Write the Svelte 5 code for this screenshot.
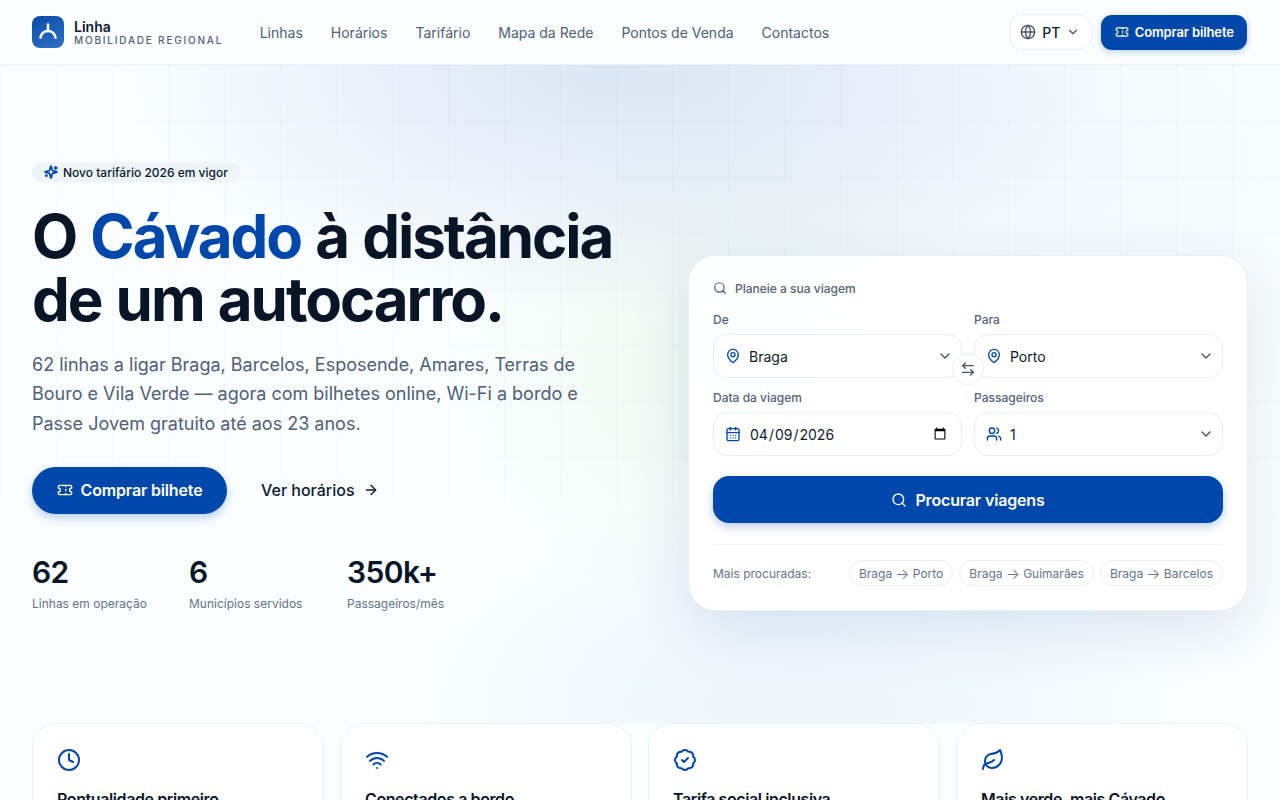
<script>
  const icons = {
    ticket: ['M2 9a3 3 0 0 1 0 6v2a2 2 0 0 0 2 2h16a2 2 0 0 0 2-2v-2a3 3 0 0 1 0-6V7a2 2 0 0 0-2-2H4a2 2 0 0 0-2 2Z', 'M13 5v2', 'M13 17v2', 'M13 11v2'],
    globe: ['M2 12a10 10 0 1 0 20 0a10 10 0 1 0-20 0', 'M12 2a14.5 14.5 0 0 0 0 20 14.5 14.5 0 0 0 0-20', 'M2 12h20'],
    chevron: ['m6 9 6 6 6-6'],
    search: ['M3 11a8 8 0 1 0 16 0a8 8 0 1 0-16 0', 'm21 21-4.3-4.3'],
    pin: ['M20 10c0 6-8 12-8 12s-8-6-8-12a8 8 0 0 1 16 0Z', 'M9 10a3 3 0 1 0 6 0a3 3 0 1 0-6 0'],
    calendar: ['M5 4h14a2 2 0 0 1 2 2v14a2 2 0 0 1-2 2H5a2 2 0 0 1-2-2V6a2 2 0 0 1 2-2Z', 'M16 2v4', 'M8 2v4', 'M3 10h18', 'M8 14h.01', 'M12 14h.01', 'M16 14h.01', 'M8 18h.01', 'M12 18h.01', 'M16 18h.01'],
    users: ['M16 21v-2a4 4 0 0 0-4-4H6a4 4 0 0 0-4 4v2', 'M5 7a4 4 0 1 0 8 0a4 4 0 1 0-8 0', 'M22 21v-2a4 4 0 0 0-3-3.87', 'M16 3.13a4 4 0 0 1 0 7.75'],
    arrow: ['M5 12h14', 'm12 5 7 7-7 7'],
    swap: ['M8 3 4 7l4 4', 'M4 7h16', 'm16 21 4-4-4-4', 'M20 17H4'],
    clock: ['M2 12a10 10 0 1 0 20 0a10 10 0 1 0-20 0', 'M12 6v6l4 2'],
    wifi: ['M12 20h.01', 'M2 8.82a15 15 0 0 1 20 0', 'M5 12.859a10 10 0 0 1 14 0', 'M8.5 16.429a5 5 0 0 1 7 0'],
    badge: ['M3.85 8.62a4 4 0 0 1 4.78-4.77 4 4 0 0 1 6.74 0 4 4 0 0 1 4.78 4.78 4 4 0 0 1 0 6.74 4 4 0 0 1-4.77 4.78 4 4 0 0 1-6.75 0 4 4 0 0 1-4.78-4.77 4 4 0 0 1 0-6.76Z', 'm9 12 2 2 4-4'],
    leaf: ['M11 20A7 7 0 0 1 9.8 6.1C15.5 5 17 4.48 19 2c1 2 2 4.18 2 8 0 5.5-4.78 10-10 10Z', 'M2 21c0-3 1.85-5.36 5.08-6C9.5 14.52 12 13 13 12'],
    sparkles: ['M9.9 15.5A2 2 0 0 0 8.5 14l-6.1-1.6a.5.5 0 0 1 0-1L8.5 9.9A2 2 0 0 0 9.9 8.5l1.6-6.1a.5.5 0 0 1 1 0L14 8.5a2 2 0 0 0 1.5 1.4l6.1 1.6a.5.5 0 0 1 0 1L15.5 14a2 2 0 0 0-1.5 1.5l-1.6 6.1a.5.5 0 0 1-1 0z', 'M20 3v4', 'M22 5h-4', 'M4 17v2', 'M5 18H3']
  }

  const nav = ['Linhas', 'Horários', 'Tarifário', 'Mapa da Rede', 'Pontos de Venda', 'Contactos']
  const stats = [
    { n: '62', l: 'Linhas em operação' },
    { n: '6', l: 'Municípios servidos' },
    { n: '350k+', l: 'Passageiros/mês' }
  ]
  const routes = ['Porto', 'Guimarães', 'Barcelos']
  const features = [
    { icon: 'clock', title: 'Pontualidade primeiro' },
    { icon: 'wifi', title: 'Conectados a bordo' },
    { icon: 'badge', title: 'Tarifa social inclusiva' },
    { icon: 'leaf', title: 'Mais verde, mais Cávado' }
  ]
</script>

{#snippet icon(name, cls)}
  <svg class="ic {cls}" viewBox="0 0 24 24" fill="none" stroke="currentColor" stroke-width="2" stroke-linecap="round" stroke-linejoin="round" aria-hidden="true">
    {#each icons[name] as d}<path {d} />{/each}
  </svg>
{/snippet}

<header class="top">
  <a class="brand" href="#top">
    <span class="logo">
      <svg viewBox="0 0 32 32" fill="none" stroke="#fff" stroke-width="2.6" stroke-linecap="round" stroke-linejoin="round" aria-hidden="true">
        <path d="M8.5 21.500c1-4.500 4-6.500 7.500-6.500s6.500 2 7.500 6.500" />
        <path d="M16 15V8.500" />
      </svg>
    </span>
    <span class="brand-text">
      <b>Linha</b>
      <small>Mobilidade Regional</small>
    </span>
  </a>
  <nav class="nav">
    {#each nav as item}<a href="#top">{item}</a>{/each}
  </nav>
  <div class="top-actions">
    <button class="lang">
      {@render icon('globe', 's16 grey')}
      <span>PT</span>
      {@render icon('chevron', 's14 grey')}
    </button>
    <button class="cta">
      {@render icon('ticket', 's14')}
      Comprar bilhete
    </button>
  </div>
</header>

<main>
  <section class="hero">
    <div class="grid-lines"></div>
    <div class="hero-left">
      <span class="pill">{@render icon('sparkles', 's14 blue heavy')} Novo tarifário 2026 em vigor</span>
      <h1>O <em>Cávado</em> à distância de um autocarro.</h1>
      <p class="lead">62 linhas a ligar Braga, Barcelos, Esposende, Amares, Terras de Bouro e Vila Verde — agora com bilhetes online, Wi-Fi a bordo e Passe Jovem gratuito até aos 23 anos.</p>
      <div class="hero-btns">
        <button class="big">{@render icon('ticket', 's16')} Comprar bilhete</button>
        <a class="ghost" href="#top">Ver horários {@render icon('arrow', 's16')}</a>
      </div>
      <div class="stats">
        {#each stats as s}
          <div>
            <div class="num">{s.n}</div>
            <div class="lbl">{s.l}</div>
          </div>
        {/each}
      </div>
    </div>

    <form class="planner">
      <div class="plan-title">{@render icon('search', 's14 grey')} Planeie a sua viagem</div>
      <div class="fields">
        <label class="f">
          <span>De</span>
          <div class="box">
            {@render icon('pin', 's16 blue')}
            <select><option>Braga</option></select>
            {@render icon('chevron', 's16 grey')}
          </div>
        </label>
        <label class="f">
          <span>Para</span>
          <div class="box">
            {@render icon('pin', 's16 blue')}
            <select><option>Porto</option></select>
            {@render icon('chevron', 's16 grey')}
          </div>
        </label>
        <label class="f">
          <span>Data da viagem</span>
          <div class="box date">
            {@render icon('calendar', 's16 blue')}
            <input type="date" value="2026-04-09" />
          </div>
        </label>
        <label class="f">
          <span>Passageiros</span>
          <div class="box">
            {@render icon('users', 's16 blue')}
            <select><option>1</option></select>
            {@render icon('chevron', 's16 grey')}
          </div>
        </label>
        <button type="button" class="swap" aria-label="Trocar">{@render icon('swap', 's16 grey')}</button>
      </div>
      <button type="button" class="go">{@render icon('search', 's16')} Procurar viagens</button>
      <div class="popular">
        <span>Mais procuradas:</span>
        <div class="chips">
          {#each routes as r}<a href="#top">Braga <i>→</i> {r}</a>{/each}
        </div>
      </div>
    </form>
  </section>

  <section class="features">
    {#each features as f}
      <article>
        {@render icon(f.icon, 's24 blue')}
        <h3>{f.title}</h3>
      </article>
    {/each}
  </section>
</main>

<style>
  :global(body) {
    background: #fafeff;
    color: #0b1b2e;
    font-family: Inter, "Liberation Sans", sans-serif;
    overflow-x: hidden;
  }
  a { color: inherit; text-decoration: none; }
  button { font-family: inherit; cursor: pointer; }

  .ic { flex: none; display: block; }
  .s14 { width: 14px; height: 14px; }
  .s16 { width: 16px; height: 16px; }
  .s24 { width: 24px; height: 24px; }
  .grey { color: #475569; }
  .blue { color: #0047ab; }
  .heavy { stroke-width: 3; }

  .top {
    height: 64px;
    display: flex;
    align-items: center;
    padding: 0 32px;
    background: #fbfdff;
    border-bottom: 1px solid #eef3f8;
  }
  .brand { display: flex; align-items: center; gap: 10px; }
  .logo {
    width: 32px;
    height: 32px;
    border-radius: 8px;
    background: linear-gradient(150deg, #0a4aa8, #2f72c4);
    display: block;
  }
  .logo svg { display: block; width: 32px; height: 32px; }
  .brand-text { display: flex; flex-direction: column; margin-top: 2px; }
  .brand-text b { font-size: 14px; font-weight: 600; line-height: 14px; color: #0b1b2e; }
  .brand-text small {
    font-size: 10px;
    line-height: 12px;
    font-weight: 500;
    letter-spacing: 0.18em;
    text-transform: uppercase;
    color: #526278;
  }
  .nav { display: flex; gap: 28px; margin-left: 36.5px; font-size: 14px; color: #4f6077; }
  .top-actions { margin-left: auto; margin-right: 0.7px; display: flex; align-items: center; gap: 8px; }
  .lang {
    height: 36px;
    width: 84px;
    display: flex;
    align-items: center;
    gap: 6px;
    padding: 0 0 0 10px;
    font-size: 14px;
    font-weight: 500;
    color: #0b1b2e;
    background: #fff;
    border: 1px solid #eaf0f6;
    border-radius: 14px;
  }
  .cta {
    height: 35px;
    width: 146px;
    display: flex;
    align-items: center;
    justify-content: center;
    gap: 6px;
    border: 0;
    border-radius: 11px;
    background: #0047ab;
    color: #fff;
    font-size: 13px;
    font-weight: 600;
    letter-spacing: -0.01em;
    box-shadow: 0 2px 6px rgba(0, 71, 171, 0.25);
  }

  .hero {
    position: relative;
    display: grid;
    grid-template-columns: 1.1fr 1fr;
    gap: 40px;
    align-items: start;
    height: 658px;
    box-sizing: border-box;
    padding: 97px 32px 0;
    background:
      radial-gradient(500px 250px at 610px 0, rgba(0, 71, 171, 0.13), transparent 100%),
      radial-gradient(460px 300px at 1000px 100px, rgba(0, 71, 171, 0.03), transparent 100%),
      radial-gradient(300px 260px at 740px 300px, rgba(110, 200, 90, 0.09), transparent 100%),
      radial-gradient(420px 220px at 800px 640px, rgba(0, 120, 190, 0.06), transparent 100%);
  }
  .grid-lines {
    position: absolute;
    inset: 0;
    background-image:
      linear-gradient(to right, rgba(0, 71, 171, 0.018) 1px, transparent 1px),
      linear-gradient(to bottom, rgba(0, 71, 171, 0.018) 1px, transparent 1px);
    background-size: 56px 56px;
    -webkit-mask-image: linear-gradient(to bottom, #000 60%, transparent 80%);
    mask-image: linear-gradient(to bottom, #000 60%, transparent 80%);
    pointer-events: none;
  }
  .hero-left { position: relative; }
  .pill {
    display: inline-flex;
    align-items: center;
    gap: 5px;
    height: 20px;
    padding: 0 12px;
    border-radius: 99px;
    background: #edf4fa;
    font-size: 12px;
    font-weight: 500;
    color: #0b1b2e;
  }
  h1 {
    margin: 22px 0 0;
    font-size: 60px;
    line-height: 63px;
    font-weight: 700;
    letter-spacing: -2.05px;
    word-spacing: 2px;
    color: #071527;
  }
  h1 em { font-style: normal; color: #0047ab; }
  .lead {
    margin: 19px 0 0;
    max-width: 560px;
    font-size: 18px;
    line-height: 29.25px;
    color: #4f6077;
  }
  .hero-btns { display: flex; align-items: center; gap: 34px; margin-top: 29px; }
  .big {
    height: 47px;
    width: 195px;
    display: flex;
    align-items: center;
    justify-content: center;
    gap: 8px;
    border: 0;
    border-radius: 24px;
    background: #0047ab;
    color: #fff;
    font-size: 16px;
    font-weight: 600;
    letter-spacing: -0.01em;
    box-shadow: 0 4px 10px rgba(0, 71, 171, 0.25);
  }
  .ghost { display: flex; align-items: center; gap: 8px; font-size: 16px; font-weight: 500; color: #0b1b2e; }
  .stats { display: grid; grid-template-columns: 157px 158px auto; margin-top: 40px; }
  .num { font-size: 30px; line-height: 36px; font-weight: 600; letter-spacing: -0.02em; color: #071527; }
  .lbl { margin-top: 6px; font-size: 12px; line-height: 16px; color: #64748b; }

  .planner {
    position: relative;
    margin-top: 93px;
    background: rgba(255, 255, 255, 0.94);
    border: 1px solid #e8f0f6;
    border-radius: 28px;
    padding: 24px;
    box-shadow: 0 20px 60px rgba(0, 60, 130, 0.12);
  }
  .plan-title { display: flex; align-items: center; gap: 8px; height: 16px; font-size: 12px; font-weight: 500; color: #526278; }
  .fields {
    position: relative;
    display: grid;
    grid-template-columns: 1fr 1fr;
    gap: 12px;
    margin-top: 16px;
  }
  .f { display: flex; flex-direction: column; gap: 6px; font-size: 12px; font-weight: 500; color: #526278; }
  .f > span { line-height: 16px; }
  .box {
    height: 44px;
    box-sizing: border-box;
    display: flex;
    align-items: center;
    gap: 8px;
    padding: 0 8px 0 11px;
    background: #fff;
    border: 1px solid #e6eff6;
    border-radius: 14px;
  }
  .box.date { padding-right: 12px; }
  select, input {
    flex: 1;
    min-width: 0;
    border: 0;
    padding: 0;
    outline: 0;
    background: transparent;
    font-family: inherit;
    font-size: 14px;
    color: #0b1b2e;
    appearance: none;
  }
  input { appearance: auto; }
  .swap {
    position: absolute;
    left: 239px;
    top: 41px;
    width: 32px;
    height: 32px;
    display: flex;
    align-items: center;
    justify-content: center;
    padding: 0;
    border-radius: 50%;
    background: #fff;
    border: 1px solid #e6eff6;
  }
  .go {
    width: 100%;
    height: 47px;
    margin-top: 20px;
    display: flex;
    align-items: center;
    justify-content: center;
    gap: 8px;
    border: 0;
    border-radius: 16px;
    background: #0047ab;
    color: #fff;
    font-size: 16px;
    font-weight: 600;
    letter-spacing: -0.01em;
    box-shadow: 0 4px 10px rgba(0, 71, 171, 0.25);
  }
  .popular {
    display: flex;
    align-items: center;
    justify-content: space-between;
    margin-top: 21px;
    padding-top: 15px;
    border-top: 1px solid #eef3f8;
    font-size: 12px;
    color: #64748b;
  }
  .chips { display: flex; gap: 6px; }
  .chips a {
    display: flex;
    align-items: center;
    gap: 3.4px;
    height: 26px;
    box-sizing: border-box;
    padding: 0 9px;
    border: 1px solid #e6eff6;
    border-radius: 99px;
    background: #fff;
  }
  .chips i { font-style: normal; font-size: 14.5px; font-weight: 300; }

  .features {
    display: grid;
    grid-template-columns: repeat(4, 1fr);
    gap: 16px;
    padding: 0 32px 40px;
  }
  .features article {
    background: #fff;
    border: 1px solid #e8f1f7;
    border-radius: 24px;
    padding: 24px;
  }
  h3 {
    margin: 15px 0 0;
    font-size: 16px;
    line-height: 24px;
    font-weight: 600;
    letter-spacing: -0.025em;
    color: #071527;
  }
</style>
